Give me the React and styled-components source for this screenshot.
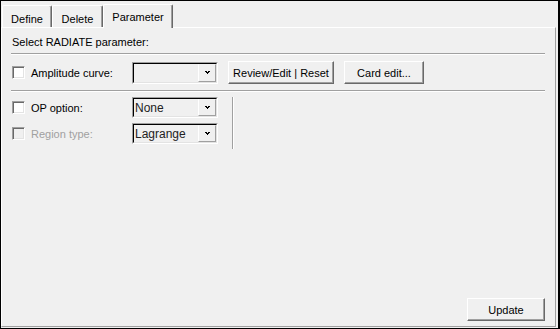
import styled, { createGlobalStyle } from "styled-components";

const Global = createGlobalStyle`
  html, body { margin: 0; padding: 0; background: #f0f0f0; }
  * { box-sizing: border-box; }
`

const Window = styled.div`
  width: 560px;
  height: 329px;
  background: #f0f0f0;
  border-top: 1px solid #000;
  border-left: 1px solid #000;
  border-right: 2px solid #000;
  border-bottom: 1px solid #000;
  padding: 0 2px 1px 0;
  display: flex;
  flex-direction: column;
  font-family: "Liberation Sans", Arial, sans-serif;
  font-size: 11px;
  color: #000;
`

const TabStrip = styled.div`
  height: 26px;
  display: flex;
  align-items: flex-end;
  padding-left: 1px;
  position: relative;
  z-index: 1;
`

const Tab = styled.div`
  width: ${p => p.w}px;
  height: ${p => (p.active ? 24 : 22)}px;
  margin-bottom: ${p => (p.active ? -1 : 0)}px;
  background: #f0f0f0;
  border-top: 1px solid #fff;
  border-left: 1px solid #fff;
  border-right: 1px solid #696969;
  box-shadow: inset -1px 0 0 #a0a0a0;
  border-top-left-radius: 2px;
  border-top-right-radius: 2px;
  display: flex;
  align-items: center;
  justify-content: center;
  padding-top: ${p => (p.active ? 1 : 4)}px;
`

const Panel = styled.div`
  flex: 1;
  display: flex;
  flex-direction: column;
  border-top: 1px solid #fff;
  border-left: 1px solid #fff;
  border-right: 1px solid #a0a0a0;
  border-bottom: 1px solid #a0a0a0;
  padding: 0 10px 5px 9px;
`

const Header = styled.div`
  height: 25px;
  line-height: 14px;
  padding: 7px 0 0 1px;
`

const Separator = styled.div`
  height: 2px;
  border-top: 1px solid #a0a0a0;
  border-bottom: 1px solid #fff;
`

const Row = styled.div`
  height: 35px;
  display: flex;
  align-items: center;
`

const Section = styled.div`
  display: flex;
  padding-top: 5px;
`

const FieldGrid = styled.div`
  display: grid;
  grid-template-columns: 121px 86px;
  grid-auto-rows: 21px;
  row-gap: 5px;
  align-items: center;
`

const VDivider = styled.div`
  width: 2px;
  height: 52px;
  margin-left: 14px;
  border-left: 1px solid #a0a0a0;
  border-right: 1px solid #fff;
`

const CheckField = styled.label`
  width: 121px;
  display: flex;
  align-items: center;
  gap: 6px;
  padding-left: 1px;
  color: ${p => (p.disabled ? "#a0a0a0" : "#000")};
`

const Box = styled.span`
  width: 13px;
  height: 13px;
  border-top: 1px solid #a0a0a0;
  border-left: 1px solid #a0a0a0;
  border-right: 1px solid #fff;
  border-bottom: 1px solid #fff;
  box-shadow: inset 1px 1px 0 #696969, inset -1px -1px 0 #e3e3e3;
  background: ${p => (p.disabled ? "#f0f0f0" : "#fff")};
`

const Combo = styled.div`
  width: 86px;
  height: ${p => p.h}px;
  border-top: 1px solid #a0a0a0;
  border-left: 1px solid #a0a0a0;
  border-right: 1px solid #fff;
  border-bottom: 1px solid #fff;
  display: flex;
`

const ComboInner = styled.div`
  flex: 1;
  display: flex;
  border-top: 1px solid #000;
  border-left: 1px solid #000;
  border-right: 1px solid #e3e3e3;
  border-bottom: 1px solid #e3e3e3;
  background: #f0f0f0;
`

const ComboText = styled.div`
  flex: 1;
  display: flex;
  align-items: center;
  padding-left: 1px;
  color: #222;
  font-size: 12px;
`

const ArrowButton = styled.div`
  width: 18px;
  display: flex;
  align-items: center;
  justify-content: center;
  border-top: 1px solid #f0f0f0;
  border-left: 1px solid #fff;
  border-right: 1px solid #a0a0a0;
  border-bottom: 1px solid #a0a0a0;
  background: #f0f0f0;
`

const Button = styled.div`
  width: ${p => p.w}px;
  height: 23px;
  margin-left: ${p => p.ml || 0}px;
  display: flex;
  align-items: center;
  justify-content: center;
  background: #f0f0f0;
  border-top: 1px solid #fff;
  border-left: 1px solid #fff;
  border-right: 1px solid #696969;
  border-bottom: 1px solid #696969;
  box-shadow: inset -1px -1px 0 #a0a0a0;
`

const Footer = styled.div`
  margin-top: auto;
  display: flex;
  justify-content: flex-end;
`

function Arrow(){
  return (
    <svg width="5" height="3" viewBox="0 0 5 3" shapeRendering="crispEdges">
      <rect x="0" y="0" width="2" height="1" fill="#000"/>
      <rect x="3" y="0" width="2" height="1" fill="#000"/>
      <rect x="1" y="1" width="3" height="1" fill="#000"/>
      <rect x="2" y="2" width="1" height="1" fill="#000"/>
    </svg>
  )
}

function Dropdown({ value, h }){
  return (
    <Combo h={h}>
      <ComboInner>
        <ComboText>{value}</ComboText>
        <ArrowButton><Arrow/></ArrowButton>
      </ComboInner>
    </Combo>
  )
}

function Check({ label, disabled }){
  return (
    <CheckField disabled={disabled}>
      <Box disabled={disabled}/>
      <span>{label}</span>
    </CheckField>
  )
}

export default function App(){
  return (
    <>
      <Global/>
      <Window>
        <TabStrip>
          <Tab w={50}>Define</Tab>
          <Tab w={51}>Delete</Tab>
          <Tab w={70} active>Parameter</Tab>
        </TabStrip>
        <Panel>
          <Header>Select RADIATE parameter:</Header>
          <Separator/>
          <Row>
            <Check label="Amplitude curve:"/>
            <Dropdown value="" h={22}/>
            <Button w={106} ml={10}>Review/Edit | Reset</Button>
            <Button w={80} ml={10}>Card edit...</Button>
          </Row>
          <Separator/>
          <Section>
            <FieldGrid>
              <Check label="OP option:"/>
              <Dropdown value="None" h={21}/>
              <Check label="Region type:" disabled/>
              <Dropdown value="Lagrange" h={21}/>
            </FieldGrid>
            <VDivider/>
          </Section>
          <Footer>
            <Button w={78}>Update</Button>
          </Footer>
        </Panel>
      </Window>
    </>
  )
}
